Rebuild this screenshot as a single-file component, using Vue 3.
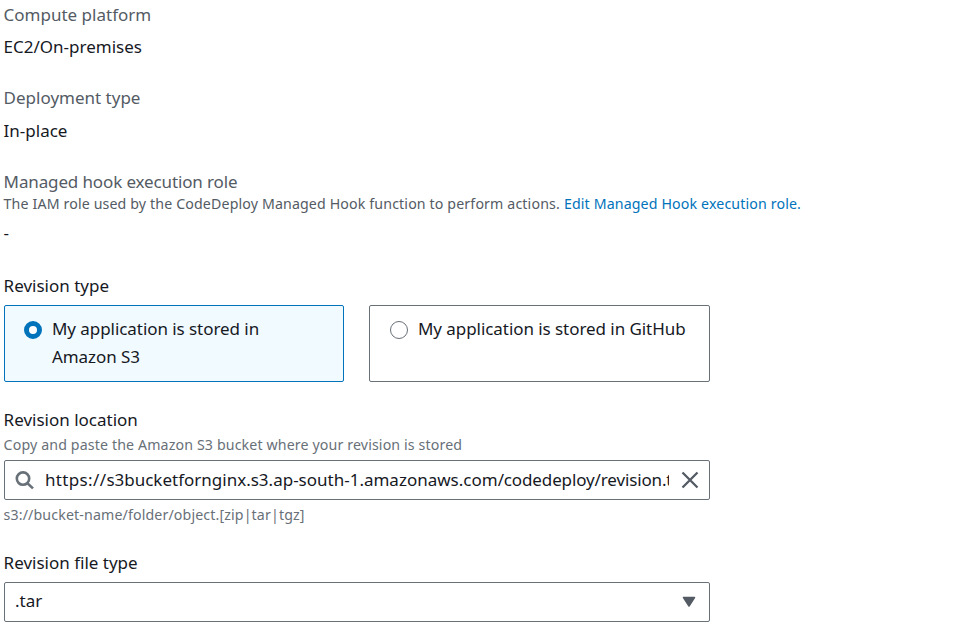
<script setup>
import { ref } from 'vue'

const revisionType = ref('s3')
const location = ref({
  scheme: 'https://',
  host: 's3bucketfornginx.s3.ap-south-1.amazonaws.com',
  path: '/codedeploy/revision.tar'
})
</script>

<template>
  <main class="form">
    <section class="detail">
      <div class="label">Compute platform</div>
      <div class="value">EC2/On-premises</div>
    </section>
    <section class="detail deployment">
      <div class="label">Deployment type</div>
      <div class="value">In-place</div>
    </section>
    <section class="detail role">
      <div class="label">Managed hook execution role</div>
      <div class="description">
        <span>The IAM role used by the CodeDeploy Managed Hook function to perform actions.</span>
        <a>Edit Managed Hook execution role.</a>
      </div>
      <div class="value dash">-</div>
    </section>

    <section class="field type">
      <div class="title">Revision type</div>
      <div class="tiles">
        <label class="tile" :class="{ selected: revisionType === 's3' }" @click="revisionType = 's3'">
          <span class="radio"></span>
          <span class="tile-text">My application is stored in<br>Amazon S3</span>
        </label>
        <label class="tile" :class="{ selected: revisionType === 'github' }" @click="revisionType = 'github'">
          <span class="radio"></span>
          <span class="tile-text">My application is stored in GitHub</span>
        </label>
      </div>
    </section>

    <section class="field location">
      <div class="title">Revision location</div>
      <div class="hint">Copy and paste the Amazon S3 bucket where your revision is stored</div>
      <div class="control">
        <svg class="search" width="20" height="20" viewBox="0 0 20 20">
          <circle cx="8" cy="8.6" r="6.2" />
          <path d="M12.4 13.2L18 18.4" />
        </svg>
        <div class="url"><span class="scheme">{{ location.scheme }}</span><span>{{ location.host }}</span><span class="path">{{ location.path }}</span></div>
        <svg class="clear" width="18" height="18" viewBox="0 0 18 18">
          <path d="M1.5 1.5L16.5 16.5M16.5 1.5L1.5 16.5" />
        </svg>
      </div>
      <div class="hint below">s3://bucket-name/folder/object.[zip|tar|tgz]</div>
    </section>

    <section class="field file">
      <div class="title">Revision file type</div>
      <div class="control select">
        <div class="choice">.tar</div>
        <svg class="caret" width="14" height="12" viewBox="0 0 14 12">
          <path d="M1.5 1.5H12.5L7 10Z" />
        </svg>
      </div>
    </section>
  </main>
</template>

<style>
body {
  background: #fff;
}
</style>

<style scoped>
.form {
  box-sizing: border-box;
  width: 959px;
  height: 634px;
  padding: 4px 0 0 3.6px;
  overflow: hidden;
  font-family: "Noto Sans", "Open Sans", sans-serif;
  font-size: 17px;
  line-height: 22px;
  color: #16191f;
  white-space: nowrap;
}
.label { color: #545b64; }
.value { margin-top: 10px; }
.deployment { margin-top: 29px; }
.deployment .value { margin-top: 11px; }
.role { margin-top: 29px; }
.role .label { letter-spacing: -0.13px; }
.description {
  margin-top: 1px;
  font-size: 14.2px;
  line-height: 20px;
  letter-spacing: 0.135px;
  color: #545b64;
  display: flex;
  gap: 4px;
}
.description a { color: #0073bb; }
.role .dash { margin-top: 8px; }
.type { margin-top: 31px; }
.tiles {
  display: grid;
  grid-template-columns: 340px 341px;
  column-gap: 25px;
  margin: 8px 0 0 0.4px;
}
.tile {
  box-sizing: border-box;
  height: 77px;
  border: 1px solid #687078;
  border-radius: 2px;
  padding: 9px 19px 0 20px;
  display: flex;
  line-height: 28px;
}
.tile.selected {
  border-color: #0073bb;
  background: #f1faff;
  padding-left: 19px;
}
.tile-text { letter-spacing: -0.06px; }
.radio {
  box-sizing: border-box;
  flex: none;
  width: 18px;
  height: 18px;
  margin: 6px 10px 0 0;
  border: 1.5px solid #687078;
  border-radius: 50%;
  background: #fff;
}
.selected .radio { border: 5px solid #0073bb; }
.location { margin-top: 27px; }
.hint {
  margin-top: 4px;
  font-size: 14.2px;
  line-height: 20px;
  letter-spacing: 0.13px;
  color: #687078;
}
.control {
  box-sizing: border-box;
  width: 706px;
  height: 40px;
  margin: 5px 0 0 0.4px;
  border: 1px solid #687078;
  border-radius: 2px;
  display: flex;
  align-items: center;
  padding: 0 10px;
}
.search {
  flex: none;
  fill: none;
  stroke: #687078;
  stroke-width: 2.6;
}
.url {
  width: 624px;
  margin-left: 10px;
  overflow: hidden;
}
.scheme { letter-spacing: 0.35px; }
.path { letter-spacing: -0.13px; }
.clear {
  flex: none;
  margin-left: 12px;
  fill: none;
  stroke: #545b64;
  stroke-width: 2.3;
}
.hint.below { margin-top: 5px; }
.file { margin-top: 27px; }
.select {
  margin-top: 8px;
  justify-content: space-between;
  padding-right: 13px;
}
.choice { margin-bottom: 2px; }
.caret {
  fill: #545b64;
  stroke: #545b64;
  stroke-width: 1.5;
  stroke-linejoin: round;
}
</style>
